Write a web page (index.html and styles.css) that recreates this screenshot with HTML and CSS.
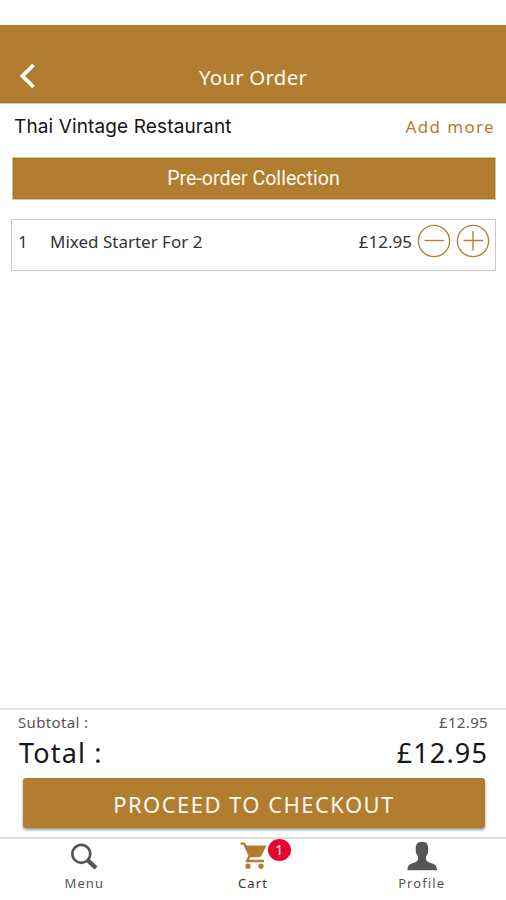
FILE: index.html
```html
<!DOCTYPE html>
<html lang="en">
<head>
<meta charset="utf-8">
<title>Your Order</title>
<link rel="stylesheet" href="styles.css">
</head>
<body>
<div class="app">
  <header class="topbar">
    <svg class="back" viewBox="0 0 16 26"><path d="M13.5 2 L2.5 13 L13.5 24" fill="none" stroke="#fff" stroke-width="3.8"/></svg>
    <h1 class="title"><span>Your Order</span></h1>
  </header>
  <main class="content">
    <div class="vendor">
      <span class="vendor-name">Thai Vintage Restaurant</span>
      <a class="add-more">Add more</a>
    </div>
    <div class="banner"><span class="banner-text">Pre-order Collection</span></div>
    <div class="item">
      <span class="qty">1</span>
      <span class="item-name">Mixed Starter For 2</span>
      <span class="item-price">£12.95</span>
      <svg class="step" viewBox="0 0 34 34"><circle cx="17" cy="17" r="15.6"/><path d="M7.5 16.5H27"/></svg>
      <svg class="step" viewBox="0 0 34 34"><circle cx="17" cy="17" r="15.6"/><path d="M7.5 16.5H27M17 7V26.5"/></svg>
    </div>
  </main>
  <section class="summary">
    <div class="row subtotal"><span class="sub-label">Subtotal :</span><span class="sub-value">£12.95</span></div>
    <div class="row total"><span class="total-label">Total :</span><span class="total-value">£12.95</span></div>
    <button class="checkout"><span>PROCEED TO CHECKOUT</span></button>
  </section>
  <nav class="tabs">
    <a class="tab">
      <svg class="icon" viewBox="0 0 32 30"><circle cx="13.3" cy="12.8" r="9" fill="none" stroke="#555" stroke-width="2.7"/><path d="M19.5 19L28 27" stroke="#555" stroke-width="4.4"/></svg>
      <span class="tab-label menu">Menu</span>
    </a>
    <a class="tab active">
      <svg class="icon" viewBox="0 0 32 30"><path d="M3.5 2.6H7.2L12.8 14.600L10.200 20H27" fill="none" stroke="#b27d31" stroke-width="2.4"/><path d="M7.5 4.400H29.500L24.600 14.600Q23.800 16.200 22 16.200H12.500Z" fill="#b27d31"/><circle cx="11" cy="25.200" r="2.600" fill="#b27d31"/><circle cx="24" cy="25.200" r="2.600" fill="#b27d31"/></svg>
      <span class="badge">1</span>
      <span class="tab-label cart">Cart</span>
    </a>
    <a class="tab">
      <svg class="icon" viewBox="0 0 32 30"><path d="M16 .8C20.800 .8 22.600 3.500 22.200 8.800C22.800 11.800 20.800 13.900 20 16C19.600 19.800 21.200 21 25.500 22.300C29.500 23.600 31 25.500 31 29.200H1.500C1.500 25.500 2.500 23.600 6.500 22.300C10.800 21 12.400 19.800 12 16C11.200 13.900 9.200 11.800 9.800 8.800C9.400 3.500 11.200 .8 16 .8Z" fill="#555"/></svg>
      <span class="tab-label profile">Profile</span>
    </a>
  </nav>
</div>
</body>
</html>
```
FILE: styles.css
```css
* { box-sizing: border-box; }
body { margin: 0; background: #fff; font-family: "Noto Sans", sans-serif; color: #333; }
.app { height: 900px; padding-top: 25px; display: flex; flex-direction: column; overflow: hidden; }
.topbar { height: 78px; flex: none; background: #b27d31; border-bottom: 1px solid #a9732b; box-shadow: 0 1px 1px #cfcbdc; display: grid; grid-template-columns: 60px 1fr 60px; align-items: end; padding-bottom: 12px; }
.back { width: 16px; height: 26px; margin-left: 20px; margin-bottom: 1px; }
.title { margin: 0; text-align: center; color: #fffaf0; font-size: 20.5px; line-height: 25px; font-weight: 400; letter-spacing: .2px; }
.content { flex: 1; padding: 0 10px 0 11px; }
.vendor { display: flex; justify-content: space-between; align-items: center; height: 46px; padding: 0 1px 0 3px; }
.vendor-name { font-family: Inter, sans-serif; font-size: 19px; color: #161616; letter-spacing: .13px; }
.add-more { color: #b27d31; font-size: 17px; letter-spacing: 1.35px; }
.banner { height: 43px; margin: 8px 0 0 1px; border: 1px solid #d4c6ab; background: #b27d31; box-shadow: inset 0 0 0 1px #a97311; color: #fffaf0; display: flex; align-items: center; justify-content: center; font-family: Roboto, sans-serif; font-size: 19.6px; }
.banner-text { margin-right: 1px; }
.item { height: 52px; margin-top: 19px; border: 1px solid #c9c9c9; display: flex; align-items: center; padding: 0 5px 8px 6px; font-size: 17px; }
.qty { width: 32px; }
.item-name { flex: 1; }
.item-price { margin-right: 5px; }
.step { width: 34px; height: 34px; fill: none; stroke: #b27d31; stroke-width: 1.3; }
.step + .step { margin-left: 5px; }
.summary { height: 129px; flex: none; border-top: 2px solid #e3e3e3; padding: 1px 18px 0; }
.row { display: flex; justify-content: space-between; align-items: center; }
.subtotal { height: 22px; font-size: 15px; color: #555; letter-spacing: .35px; }
.total { height: 38px; padding-left: 1px; font-size: 27px; color: #161616; letter-spacing: 1.15px; }
.checkout { display: block; width: 462px; height: 50px; margin: 7px 0 0 5px; padding: 2px 0 0; border: 0; border-radius: 3px; background: #b27d31; box-shadow: 0 2px 3px rgba(0,0,0,.4); color: #fffaf0; font: 22px "Noto Sans", sans-serif; letter-spacing: 1.45px; }
.tabs { height: 63px; flex: none; border-top: 2px solid #dedede; display: grid; grid-template-columns: repeat(3, 1fr); }
.tab { position: relative; display: flex; flex-direction: column; align-items: center; font-size: 13px; line-height: 18px; letter-spacing: 1.1px; color: #555; }
.tab.active { color: #333; }
.icon { width: 32px; height: 30px; margin-top: 2px; }
.tab-label { margin-top: 3px; }
.badge { position: absolute; left: 99px; top: 0; width: 23px; height: 22px; border-radius: 50%; background: #e6062d; color: #fff; font-size: 14px; line-height: 22px; letter-spacing: 0; text-align: center; }
```
